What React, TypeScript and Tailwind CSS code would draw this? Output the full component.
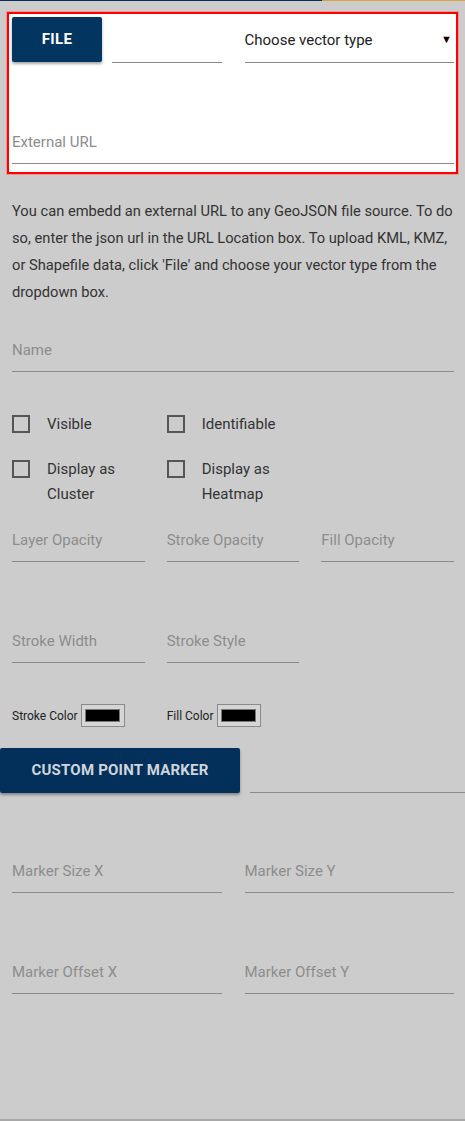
import React from "react";

const Field = ({ label, className = "" }: { label: string; className?: string }) => (
  <div
    className={
      "h-[46px] pt-[4px] border-b border-[#8a8a8a] flex items-center text-[15px] text-[#8c8c8c] " + className
    }
  >
    {label}
  </div>
);

const Check = ({ lines }: { lines: string[] }) => (
  <div className="flex items-start">
    <div className="mt-[3px] w-[18px] h-[18px] border-2 border-[#555] shrink-0" />
    <div className="ml-[17px] text-[15px] leading-[25px] text-[#333]">
      {lines.map((l) => (
        <div key={l}>{l}</div>
      ))}
    </div>
  </div>
);

const Swatch = () => (
  <div className="w-[44px] h-[23px] border border-[#8a8a8a] bg-[#d6d6d6] flex items-center justify-center">
    <div className="w-[35px] h-[13px] bg-black border border-[#777]" />
  </div>
);

export default function App() {
  return (
    <div
      className="w-[465px] h-[1121px] bg-[#cccccc] border-b-2 border-[#a8a8a8] overflow-hidden"
      style={{ fontFamily: "Roboto, 'Noto Sans', Arial, sans-serif" }}
    >
      <div className="flex h-px">
        <div className="w-[322px] bg-[#0a2f55]" />
        <div className="flex-1 bg-[#d9a441]" />
      </div>
      <div className="pl-[12px] pr-[11px]">
        <div className="mt-[11px] ml-[-5px] mr-[-4px] border-2 border-[#ff0000] bg-white pl-[3px] pr-[2px] pt-[3px] pb-[8px] shadow-[0_0_0_1px_rgba(255,120,120,0.6)]">
          <div className="grid grid-cols-2 gap-x-[23px]">
            <div className="flex items-start">
              <div className="w-[90px] h-[45px] bg-[#02355f] rounded-[2px] shadow-[0_2px_3px_rgba(0,0,0,0.35)] flex items-center justify-center text-white text-[15px] font-bold tracking-[0.3px]">
                FILE
              </div>
              <div className="ml-[10px] flex-1 h-[46px] border-b border-[#8a8a8a]" />
            </div>
            <div className="h-[46px] pt-[2px] border-b border-[#8a8a8a] flex items-center justify-between text-[15px] text-[#222]">
              <span>Choose vector type</span>
              <span className="text-[11px] text-black mr-[2px]">▼</span>
            </div>
          </div>
          <Field label="External URL" className="mt-[55px]" />
        </div>

        <p className="mt-[24px] mr-[-8px] text-[14.7px] leading-[27px] text-[#333]">
          You can embedd an external URL to any GeoJSON file source. To do so, enter the json url in the URL
          Location box. To upload KML, KMZ, or Shapefile data, click 'File' and choose your vector type from the
          dropdown box.
        </p>

        <Field label="Name" className="mt-[20px]" />

        <div className="mt-[40px] grid grid-cols-3 gap-x-[22px] gap-y-[20px]">
          <Check lines={["Visible"]} />
          <Check lines={["Identifiable"]} />
          <div />
          <Check lines={["Display as", "Cluster"]} />
          <Check lines={["Display as", "Heatmap"]} />
          <div />
        </div>

        <div className="mt-[9px] grid grid-cols-3 gap-x-[22px]">
          <Field label="Layer Opacity" />
          <Field label="Stroke Opacity" />
          <Field label="Fill Opacity" />
        </div>

        <div className="mt-[55px] grid grid-cols-3 gap-x-[22px]">
          <Field label="Stroke Width" />
          <Field label="Stroke Style" />
          <div />
        </div>

        <div className="mt-[41px] grid grid-cols-3 gap-x-[22px] text-[12px] text-[#222]">
          <div className="flex items-center gap-[3px]">
            <span>Stroke Color</span>
            <Swatch />
          </div>
          <div className="flex items-center gap-[3px]">
            <span>Fill Color</span>
            <Swatch />
          </div>
        </div>
      </div>

      <div className="mt-[20px] flex items-end">
        <div className="w-[240px] h-[45px] bg-[#02305a] rounded-[2px] shadow-[0_2px_3px_rgba(0,0,0,0.35)] flex items-center justify-center text-[#cfd5dc] text-[15px] font-bold tracking-[0.2px]">
          CUSTOM POINT MARKER
        </div>
        <div className="ml-[10px] flex-1 h-[46px] border-b border-[#8a8a8a]" />
      </div>

      <div className="pl-[12px] pr-[11px]">
        <div className="mt-[54px] grid grid-cols-2 gap-x-[23px]">
          <Field label="Marker Size X" />
          <Field label="Marker Size Y" />
        </div>
        <div className="mt-[55px] grid grid-cols-2 gap-x-[23px]">
          <Field label="Marker Offset X" />
          <Field label="Marker Offset Y" />
        </div>
      </div>
    </div>
  );
}
